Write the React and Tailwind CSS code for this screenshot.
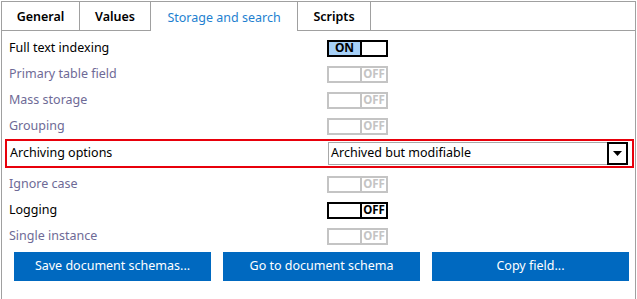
import React from 'react';

const tabs = ['General', 'Values', 'Storage and search', 'Scripts'];

const Toggle = ({ on, enabled }) => {
  if (on) {
    return (
      <div className="flex h-[17px] w-[61px] border-2 border-black">
        <div className="flex w-[33px] items-center justify-center border-r-2 border-black bg-[#a6d0f7] text-[12px] font-bold leading-none text-black">ON</div>
        <div className="flex-1 bg-white"></div>
      </div>
    );
  }
  const c = enabled ? 'border-black text-black' : 'border-[#c4c4c4] text-[#c4c4c4]';
  return (
    <div className={`flex h-[17px] w-[61px] border-2 ${c}`}>
      <div className={`w-[33px] border-r-2 ${enabled ? 'border-black' : 'border-[#c4c4c4]'}`}></div>
      <div className="flex flex-1 items-center justify-center text-[11.5px] font-bold leading-none">OFF</div>
    </div>
  );
};

const Row = ({ label, enabled, on }) => (
  <div className="flex h-[26px] items-center px-[7px]">
    <div className={`w-[318px] text-[12.5px] ${enabled ? 'text-black' : 'text-[#6e6a96]'}`}>{label}</div>
    <Toggle on={on} enabled={enabled} />
  </div>
);

export default function App() {
  return (
    <div className="h-[299px] w-[637px] bg-white" style={{ fontFamily: '"Noto Sans", "Open Sans", sans-serif' }}>
      <div className="ml-px mr-px mt-px h-[298px] w-[635px] border-x border-t border-[#a0a0a0]">
        {/* Tab strip */}
        <div className="flex h-[29px]">
          {tabs.map((t) => {
            const active = t === 'Storage and search';
            const w = { General: 'w-[78px]', Values: 'w-[71px]', 'Storage and search': 'w-[147px]', Scripts: 'w-[73px]' }[t];
            return (
              <div
                key={t}
                className={`flex items-center justify-center border-r border-[#a0a0a0] pt-[3px] text-[12.5px] ${w} ${active ? 'text-[#1e7fd0]' : 'border-b font-semibold text-black'}`}
              >
                {t}
              </div>
            );
          })}
          <div className="flex-1 border-b border-[#a0a0a0]"></div>
        </div>

        {/* Fields */}
        <div className="pt-[4px]">
          <Row label="Full text indexing" enabled on />
          <Row label="Primary table field" />
          <Row label="Mass storage" />
          <Row label="Grouping" />

          <div className="ml-[3px] mr-px flex h-[29px] items-center border-2 border-[#e8000b] pl-[3px] pr-[4px]">
            <div className="w-[318px] text-[12.5px] text-black">Archiving options</div>
            <div className="flex h-[23px] flex-1 items-center border border-[#a8a8a8] pl-[2px]">
              <span className="flex-1 text-[12.5px] text-black">Archived but modifiable</span>
              <div className="-mr-px flex h-[23px] w-[21px] items-center justify-center border-2 border-black">
                <svg width="9" height="5" viewBox="0 0 9 5"><path d="M0 0h9L4.5 5z" fill="#000" /></svg>
              </div>
            </div>
          </div>

          <div className="pt-[3px]">
            <Row label="Ignore case" />
            <Row label="Logging" enabled />
            <Row label="Single instance" />
          </div>
        </div>

        {/* Buttons */}
        <div className="mt-[3px] grid grid-cols-3 gap-[12px] pl-[12px] pr-[6px]">
          {['Save document schemas...', 'Go to document schema', 'Copy field...'].map((b) => (
            <button key={b} className="h-[29px] bg-[#0069c0] text-[12.5px] text-white">{b}</button>
          ))}
        </div>
      </div>
    </div>
  );
}
